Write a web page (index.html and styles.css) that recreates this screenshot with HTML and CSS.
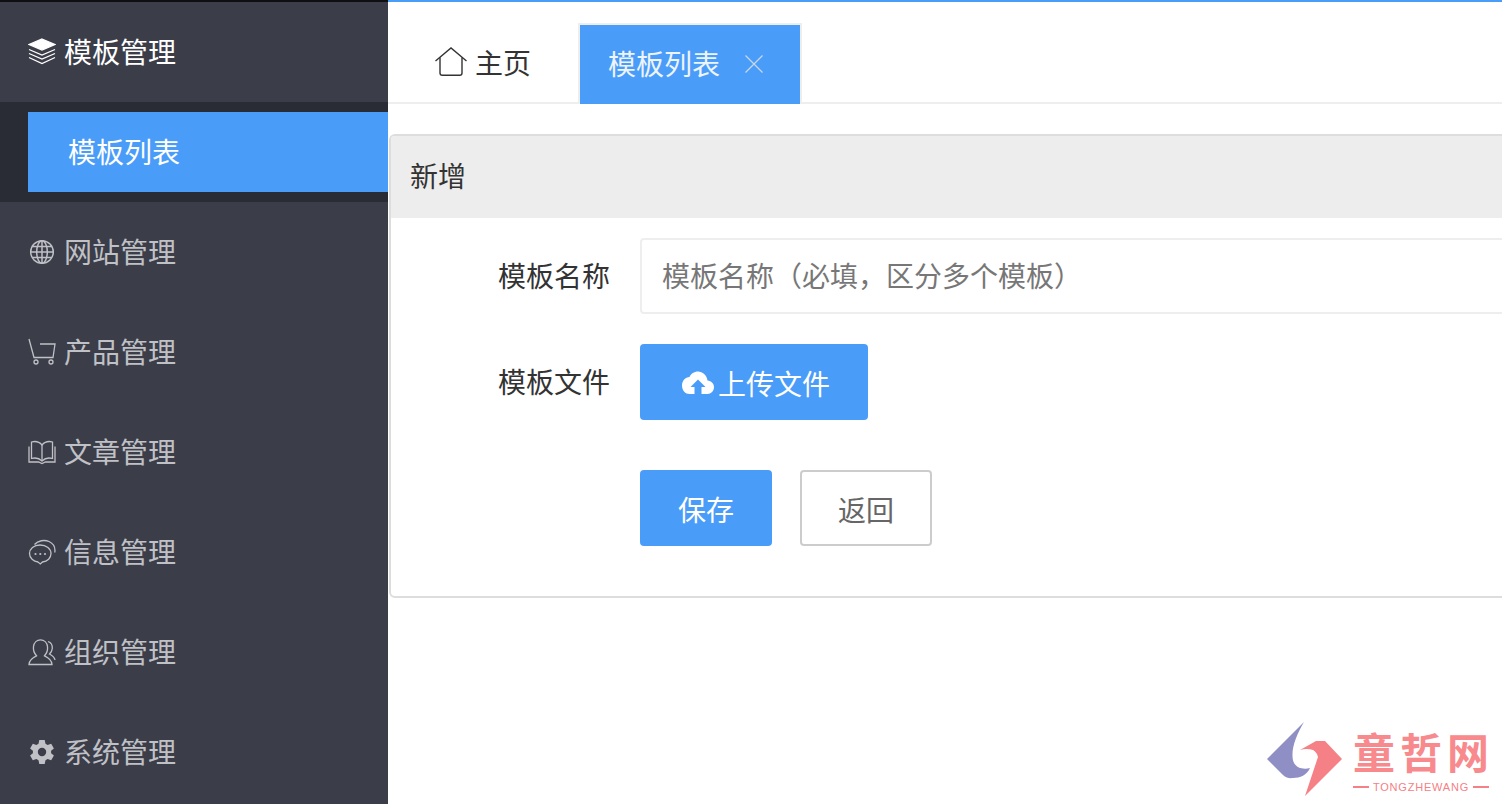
FILE: index.html
```html
<!DOCTYPE html>
<html lang="zh-CN">
<head>
<meta charset="utf-8">
<title>模板列表</title>
<link rel="stylesheet" href="styles.css">
</head>
<body>
<div class="app">
  <aside class="sidebar">
    <div class="nav-item open">
      <svg class="ico" viewBox="0 0 28 28" fill="none" stroke="currentColor" stroke-width="1.3"><path d="M14 1 L27 6.500 L14 12 L1 6.500 Z" fill="currentColor"/><path d="M1 11.500 L14 17 L27 11.500"/><path d="M1 15.500 L14 21 L27 15.500"/><path d="M1 19.500 L14 25.500 L27 19.500"/></svg>
      <span>模板管理</span>
    </div>
    <div class="subnav"><div class="sub-item">模板列表</div></div>
    <div class="nav-item">
      <svg class="ico" viewBox="0 0 28 28" fill="none" stroke="currentColor" stroke-width="1.5"><circle cx="14" cy="14" r="11.300"/><ellipse cx="14" cy="14" rx="5.300" ry="11.300"/><path d="M14 2.700V25.300M2.700 14H25.300M4.200 8.600H23.800M4.200 19.400H23.800"/></svg>
      <span>网站管理</span>
    </div>
    <div class="nav-item">
      <svg class="ico" viewBox="0 0 28 28" fill="none" stroke="currentColor" stroke-width="1.300"><path d="M1 1 L6 19.500 H25 L27 6 H12"/><circle cx="8" cy="24" r="2"/><circle cx="23" cy="24" r="2"/></svg>
      <span>产品管理</span>
    </div>
    <div class="nav-item">
      <svg class="ico" viewBox="0 0 28 28" fill="none" stroke="currentColor" stroke-width="1.300"><path d="M14 7 C11 3.500 7 3 3.500 4 V20.500 C7 19.500 11 20 14 23 C17 20 21 19.500 24.500 20.500 V4 C21 3 17 3.500 14 7 Z"/><path d="M14 7 V23"/><path d="M1 8.500 V24 H10.500 L14 25.500 L17.500 24 H27 V8.500"/></svg>
      <span>文章管理</span>
    </div>
    <div class="nav-item">
      <svg class="ico" viewBox="0 0 28 28" fill="none" stroke="currentColor" stroke-width="1.300"><path d="M12 7 C5.800 7 1.500 11 1.500 15.600 C1.500 20 5.500 23.500 10 24 L12.300 26 L14.500 24 C19.500 23.500 23 20 23 15.600 C23 11 18.500 7 12 7 Z"/><path d="M6.500 6.500 C10 2.500 16.500 1.500 21 3.500 C25.500 5.500 27.500 9.500 26.800 14.500"/><circle cx="7.500" cy="16" r="1.100" fill="currentColor" stroke="none"/><circle cx="12.300" cy="16" r="1.100" fill="currentColor" stroke="none"/><circle cx="17" cy="16" r="1.100" fill="currentColor" stroke="none"/></svg>
      <span>信息管理</span>
    </div>
    <div class="nav-item">
      <svg class="ico" viewBox="0 0 28 28" fill="none" stroke="currentColor" stroke-width="1.300"><path d="M1 26.500 H24 C24 21.500 20 19.500 16.500 17.800 C19 15 20 12.500 19.500 8.500 C19 4.500 16 1.800 12.500 1.800 C9 1.800 6 4.500 5.500 8.500 C5 12.500 6 15 8.500 17.800 C5 19.500 1 21.500 1 26.500 Z"/><path d="M20 3.500 C23 4.500 24.500 7.500 24.300 10.500 C24.100 13 23 14.500 21.500 16 C24 17.500 26.500 18.800 27 22"/></svg>
      <span>组织管理</span>
    </div>
    <div class="nav-item">
      <svg class="ico" viewBox="0 0 28 28"><path fill="currentColor" fill-rule="evenodd" d="M11.300 2 H16.700 L17.500 5.700 L19.600 6.900 L23.200 5.700 L25.900 10.400 L23.100 12.800 V15.200 L25.900 17.600 L23.200 22.300 L19.600 21.100 L17.500 22.300 L16.700 26 H11.300 L10.500 22.300 L8.400 21.100 L4.800 22.300 L2.100 17.600 L4.900 15.200 V12.800 L2.100 10.400 L4.800 5.700 L8.400 6.900 L10.500 5.700 Z M14 9.800 A4.200 4.200 0 1 0 14 18.200 A4.200 4.200 0 1 0 14 9.800 Z"/></svg>
      <span>系统管理</span>
    </div>
  </aside>
  <main class="main">
    <div class="tabs">
      <div class="tab home">
        <svg class="home-ico" viewBox="0 0 32 30" fill="none" stroke="#333" stroke-width="1.400"><path d="M0.500 14 L16 1 L31.500 14"/><path d="M5 10.500 V26 Q5 28.300 7.300 28.300 H24.700 Q27 28.300 27 26 V10.500"/></svg>
        <span>主页</span>
      </div>
      <div class="tab active">
        <span>模板列表</span>
        <svg class="close-ico" viewBox="0 0 18 18" fill="none" stroke="#c9d6e6" stroke-width="1.200"><path d="M0.500 0.500 L17.500 17.500 M17.500 0.500 L0.500 17.500"/></svg>
      </div>
    </div>
    <section class="card">
      <header class="card-head">新增</header>
      <form class="form">
        <label class="label">模板名称</label>
        <input class="input" type="text" placeholder="模板名称（必填，区分多个模板）">
        <label class="label label-file">模板文件</label>
        <div class="field">
          <button class="btn primary upload" type="button">
            <svg class="cloud" viewBox="0 0 32 24"><path fill="#fff" fill-rule="evenodd" d="M25.500 9.500 C24.800 4 20.500 0.500 16 0.500 C12 0.500 9 2.800 7.500 6 C3.300 6.300 0 9.800 0 14.500 C0 19.500 3.500 23 7.500 23 H12.500 V16 H8.500 L16 8.500 L23.500 16 H19.500 V23 H25.500 C29 23 32 20 32 16 C32 12.500 29.300 10 25.500 9.500 Z"/></svg>
            <span>上传文件</span>
          </button>
        </div>
        <div class="actions">
          <button class="btn primary small" type="button">保存</button>
          <button class="btn ghost small" type="button">返回</button>
        </div>
      </form>
    </section>
  </main>
</div>
<div class="watermark">
  <svg class="wm-logo" viewBox="0 0 76 74"><path fill="#8f8fc6" d="M37 0 L0 37 L16 53 C19 56 23 56.500 26 56 C33 56 40 53 43 46 C38 47.500 33 46 33 46 C28 44 25.500 40 25.500 34 C25 24 30 12 37 0 Z"/><path fill="#f58085" d="M33 28 L49 19 H58 L75 37 L38 74 L51 35 C50 31 48 29 46 28 C42 26.500 37 26.500 33 28 Z"/></svg>
  <div class="wm-text">
    <div class="wm-cn"><span>童</span><span>哲</span><span>网</span></div>
    <div class="wm-en"><i></i><span>TONGZHEWANG</span><i></i></div>
  </div>
</div>
</body>
</html>
```
FILE: styles.css
```css
* { box-sizing: border-box; }
html, body { margin: 0; height: 100%; overflow: hidden; background: #fff; }
body { font-family: "Noto Sans CJK SC", "Noto Sans", sans-serif; color: #333; }
.app { display: flex; height: 804px; }

.sidebar { width: 388px; flex: none; background: #3b3d49; border-top: 2px solid #0f0f12; }
.nav-item { height: 100px; display: flex; align-items: center; padding-left: 28px; gap: 8px; font-size: 28px; color: #c0c1c6; }
.nav-item span { margin-bottom: 2px; }
.nav-item.open { color: #fff; }
.ico { width: 28px; height: 28px; flex: none; }
.subnav { height: 100px; padding: 10px 0 10px 28px; background: #2a2c35; }
.sub-item { height: 80px; line-height: 78px; padding-left: 40px; background: #4a9cf9; color: #fff; font-size: 28px; }

.main { flex: 1; min-width: 0; border-top: 2px solid #4a9cf9; overflow: hidden; }
.tabs { height: 102px; display: flex; align-items: flex-end; padding-left: 31px; border-bottom: 2px solid #eee; }
.tab { height: 80px; display: flex; align-items: center; font-size: 28px; }
.home { width: 159px; padding: 0 0 0 16px; gap: 8px; color: #333; }
.home-ico { width: 32px; height: 30px; flex: none; }
.active { width: 224px; height: 81px; margin-bottom: -2px; padding: 0 0 3px 28px; gap: 25px; color: #eef4fc; background: #4a9cf9; border: 2px solid #eee; border-bottom: 0; }
.close-ico { width: 18px; height: 18px; flex: none; margin-top: 2px; }

.card { margin: 30px -40px 0 1px; height: 464px; border: 2px solid #ddd; border-radius: 6px; background: #fff; overflow: hidden; }
.card-head { height: 82px; padding: 0 0 4px 19px; display: flex; align-items: center; background: #ededed; font-size: 28px; color: #333; }
.form { display: grid; grid-template-columns: 219px 1fr; column-gap: 30px; padding-top: 20px; }
.label { font-size: 28px; color: #333; text-align: right; line-height: 74px; white-space: nowrap; }
.label-file { margin-top: 30px; }
.input { height: 76px; width: 100%; border: 2px solid #eee; border-radius: 4px; padding: 0 20px 2px; font: inherit; font-size: 28px; color: #333; outline: none; background: #fff; }
.input::placeholder { color: #777; opacity: 1; }
.field { margin-top: 30px; }
.actions { grid-column: 2; margin-top: 50px; display: flex; gap: 28px; }
.btn { height: 76px; border-radius: 4px; font: inherit; font-size: 28px; border: 0; padding: 0; display: inline-flex; align-items: center; justify-content: center; }
.primary { background: #4a9cf9; color: #fff; }
.upload { width: 228px; gap: 4px; justify-content: flex-start; padding-left: 42px; }
.upload span { margin-top: 2px; }
.cloud { width: 32px; height: 24px; flex: none; margin-top: 2px; }
.small { width: 132px; padding-top: 2px; }
.ghost { background: #fff; border: 2px solid #ccc; color: #666; }

.watermark { position: absolute; left: 1267px; top: 722px; display: flex; gap: 10px; }
.wm-logo { width: 76px; height: 74px; flex: none; }
.wm-text { width: 136px; padding-top: 3px; }
.wm-cn { display: flex; justify-content: space-between; font-size: 42px; line-height: 52px; font-weight: 700; color: #f88a8e; }
.wm-en { display: flex; align-items: center; gap: 4px; font-family: "Liberation Sans", sans-serif; font-size: 11px; line-height: 12px; letter-spacing: 0.8px; color: #f58085; margin-top: 4px; white-space: nowrap; }
.wm-en i { flex: 1; height: 2px; background: #f58085; }
```
